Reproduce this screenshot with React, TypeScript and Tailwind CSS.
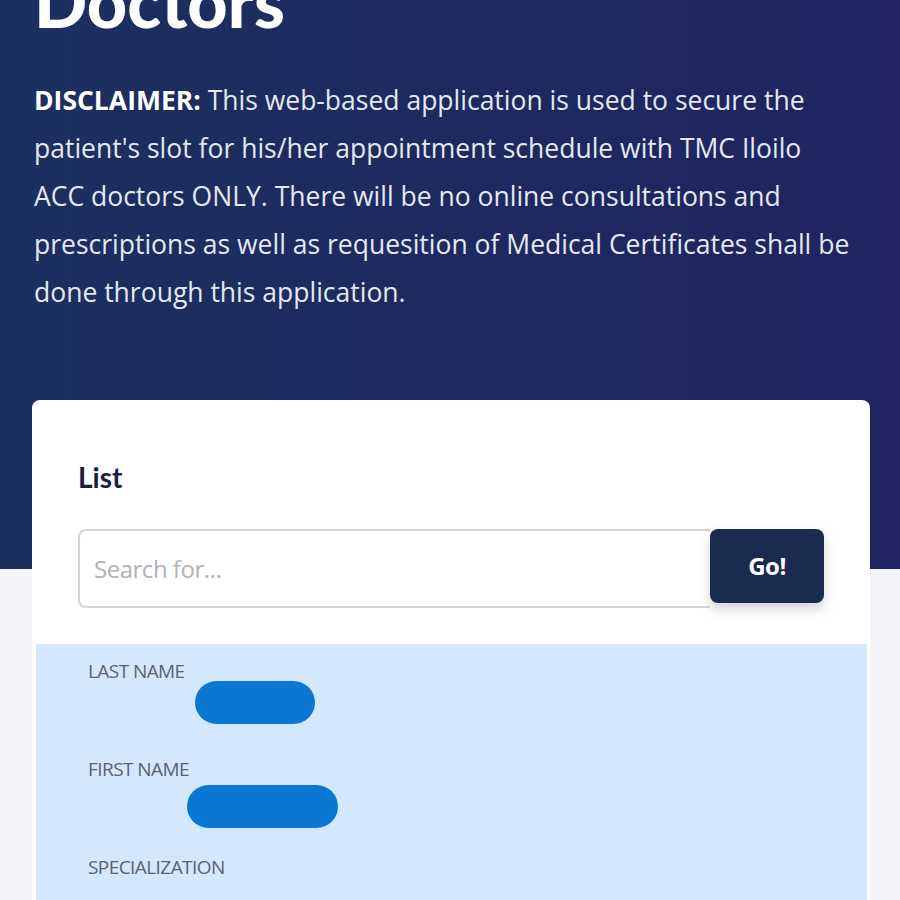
const sans = "font-['Open_Sans',_'Noto_Sans',_sans-serif]";
const heading = "font-['Lato',_'Open_Sans',_sans-serif]";

type Field = { label: string; blob?: { ml: string; w: string; mt: string } };

const fields: Field[] = [
  { label: "LAST NAME", blob: { ml: "ml-[107px]", w: "w-[120px]", mt: "-mt-[4px]" } },
  { label: "FIRST NAME", blob: { ml: "ml-[99px]", w: "w-[151px]", mt: "mt-[1px]" } },
  { label: "SPECIALIZATION" },
];

function Redacted({ ml, w, mt }: { ml: string; w: string; mt: string }) {
  return <div className={`${ml} ${w} ${mt} h-[43px] rounded-full bg-[#0a78d2]`} />;
}

export default function App() {
  return (
    <div className={`min-h-screen overflow-hidden bg-[#f3f4f8] ${sans}`}>
      <header className="bg-gradient-to-r from-[#1b3060] to-[#1f2460] pl-[34px] pr-[45px] pb-[253px]">
        <h1
          className={`-mt-[34px] text-[70px] font-black leading-none text-white ${heading}`}
        >
          Doctors
        </h1>
        <p className="mt-[40px] text-[26.5px] leading-[48px] text-[#e4e8f1]">
          <span className="font-bold text-white">DISCLAIMER:</span> This web-based
          application is used to secure the patient's slot for his/her appointment
          schedule with TMC Iloilo ACC doctors ONLY. There will be no online
          consultations and prescriptions as well as requesition of Medical
          Certificates shall be done through this application.
        </p>
      </header>

      <main className="-mt-[169px] pl-[32px] pr-[30px]">
        <div className="rounded-lg bg-white">
          <div className="px-[46px] pt-[61px]">
            <h2 className={`text-[28px] font-bold leading-[1.2] text-[#1a1d45] ${heading}`}>
              List
            </h2>
            <div className="mt-[34px] flex items-start">
              <input
                type="text"
                placeholder="Search for..."
                className="h-[79px] flex-1 rounded-l-lg border-2 border-r-0 border-[#d4d4d6] bg-white px-[14px] text-[24px] tracking-[-0.02em] text-gray-700 placeholder:text-[#b0b2b6] focus:outline-none"
              />
              <button
                type="button"
                className="h-[74px] w-[114px] rounded-lg bg-[#1a2b50] text-[24px] font-bold tracking-[-0.02em] text-white shadow-[0_6px_12px_rgba(0,0,0,0.18)]"
              >
                Go!
              </button>
            </div>
          </div>

          <div className="ml-[4px] mr-[3px] mt-[36px] bg-[#d3e8fc] pl-[52px] pt-[13px] pb-[60px]">
            {fields.map((f, i) => (
              <div key={f.label} className={i === 0 ? "" : i === 1 ? "mt-[31px]" : "mt-[25px]"}>
                <p className="text-[19px] leading-[1.5] tracking-[-0.03em] text-[#5b6270]">
                  {f.label}
                </p>
                {f.blob && <Redacted {...f.blob} />}
              </div>
            ))}
          </div>
        </div>
      </main>
    </div>
  );
}
